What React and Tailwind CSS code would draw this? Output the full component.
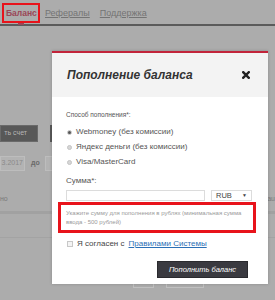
import React from 'react';

const FONT = "font-['Liberation_Sans',Arial,sans-serif]";

function Radio({ checked, children }) {
  return (
    <label className="flex items-center h-[15px] text-[8px] text-[#555]">
      <span className="w-[5px] h-[5px] rounded-full bg-[#d6d6d6] border border-[#c4c4c4] flex items-center justify-center mr-[4px] ml-[1px]">
        {checked && <span className="w-[3px] h-[3px] rounded-full bg-[#555]" />}
      </span>
      {children}
    </label>
  );
}

export default function App() {
  return (
    <div className={`relative w-[275px] h-[300px] overflow-hidden bg-[#acacac] ${FONT}`}>
      {/* Page behind the overlay */}
      <nav className="flex items-start h-[26px] pt-[3px] pl-[2px] border-b-2 border-[#5b5b5b]">
        <span className="relative w-[38px] h-[20px] border-2 border-[#e8131b] flex items-center pl-[2px] text-[8.5px] font-bold text-[#9a4656]">
          Баланс
          <span className="absolute left-[14px] bottom-[-4px] w-[6px] h-[2px] bg-[#9a4656]" />
        </span>
        <a className="ml-[5px] mt-[4px] text-[9px] text-[#747474] underline">Рефералы</a>
        <a className="ml-[10px] mt-[4px] text-[9px] text-[#747474] underline">Поддержка</a>
      </nav>

      <div className="mt-[99px] flex gap-[12px]">
        <div className="w-[38px] h-[17px] bg-[#585858] border border-[#6a6a6a] flex items-center justify-end pr-[10px] text-[7px] text-[#b5b5b5]">
          ть счет
        </div>
        <div className="w-[20px] h-[17px] bg-[#585858]" />
      </div>

      <div className="mt-[14px] flex items-center">
        <div className="w-[25px] h-[15px] bg-[#b3b3b3] border border-[#bdbdbd] flex items-center justify-end pr-[1px] text-[7px] text-[#8a8a8a]">
          3.2017
        </div>
        <span className="ml-[6px] text-[7px] font-bold text-[#6a6a6a]">до</span>
        <div className="ml-[5px] w-[20px] h-[15px] bg-[#b3b3b3] border border-[#bdbdbd]" />
      </div>

      <div className="mt-[23px] flex justify-between h-[10px] text-[7px] text-[#7a7a7a]">
        <span>но</span>
        <span>au</span>
      </div>
      <div className="mt-[7px] h-[3px] bg-[#a1a1a1]" />
      <div className="mt-[23px] h-px bg-[#a3a3a3]" />

      <div className="mt-[44px] ml-[133px] flex gap-[12px]">
        <div className="w-[21px] h-[6px] border-x border-b border-[#c0c0c0]" />
        <div className="w-[38px] h-[6px] border-x border-b border-[#c0c0c0]" />
      </div>

      {/* Modal */}
      <div className="absolute left-[52px] top-[51px] w-[216px] h-[233px] bg-white border-t-2 border-[#c2243a] shadow-[0_0_3px_rgba(0,0,0,0.2)]">
        <div className="h-[44px] bg-[#f3f3f3] flex items-center justify-between pl-[15px] pr-[18px]">
          <h2 className="text-[12px] font-bold italic text-[#333]">Пополнение баланса</h2>
          <svg width="8" height="8" viewBox="0 0 10 10">
            <path d="M1.5 1.5 L8.5 8.5 M8.5 1.5 L1.5 8.5" stroke="#222" strokeWidth="3" strokeLinecap="square" />
          </svg>
        </div>

        <div className="pl-[14px] pr-[12px]">
          <div className="mt-[13px] text-[6.5px] text-[#555]">Способ пополнения*:</div>
          <div className="mt-[5px]">
            <Radio checked>Webmoney (без комиссии)</Radio>
            <Radio>Яндекс деньги (без комиссии)</Radio>
            <Radio>Visa/MasterCard</Radio>
          </div>
          <div className="mt-[5px] text-[8px] text-[#555]">Сумма*:</div>
          <div className="mt-[3px] flex gap-[6px]">
            <div className="w-[139px] h-[11px] border border-[#dcdcdc]" />
            <div className="w-[41px] h-[11px] border border-[#dcdcdc] flex items-center justify-between px-[4px] text-[7.5px] text-[#444]">
              <span>RUB</span>
              <span className="text-[5px]">▼</span>
            </div>
          </div>
        </div>

        <div className="ml-[6px] mt-[1px] w-[198px] h-[31px] border-[3px] border-[#e8131b] pl-[5px] pt-[4px] text-[6px] leading-[9px] text-[#9a9a9a]">
          Укажите сумму для пополнения в рублях (минимальная сумма ввода - 500 рублей)
        </div>

        <div className="mt-[5px] pl-[15px] flex items-center text-[8px]">
          <span className="w-[6px] h-[6px] border border-[#c8c8c8] bg-[#f4f4f4] mr-[4px]" />
          <span className="text-[#444]">Я согласен с</span>
          <a className="ml-[4px] text-[#2b6fb5] underline">Правилами Системы</a>
        </div>

        <div className="mt-[11px] flex justify-end pr-[20px]">
          <button className="w-[91px] h-[17px] bg-[#3a3a40] border border-[#2a2a2e] text-[7.5px] italic text-white">
            Пополнить баланс
          </button>
        </div>
      </div>
    </div>
  );
}
